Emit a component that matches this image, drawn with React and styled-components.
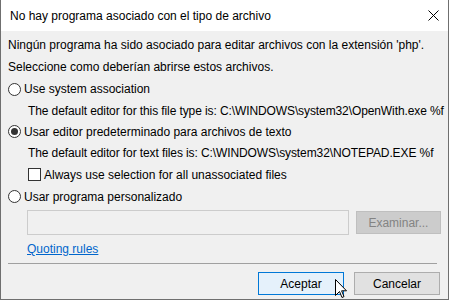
import styled, { createGlobalStyle } from "styled-components";

const GlobalStyle = createGlobalStyle`
    html, body {
        margin: 0;
        padding: 0;
        background: #ffffff;
    }
    body {
        font-family: "Segoe UI", "Liberation Sans", Arial, sans-serif;
        font-size: 12px;
        color: #000;
    }
`

const Window = styled.div`
    position: relative;
    width: 449px;
    height: 300px;
    box-sizing: border-box;
    border: 1px solid #6f6f6f;
    border-top: none;
    background: #f0f0f0;
    display: flex;
    flex-direction: column;
`

const TitleBar = styled.div`
    height: 31px;
    background: #fff;
    display: flex;
    align-items: center;
    justify-content: space-between;
    padding-left: 9px;
    padding-right: 9px;
`

const Content = styled.div`
    display: flex;
    flex-direction: column;
    padding: 3px 7px 0 7px;
`

const Row = styled.div`
    display: flex;
    align-items: center;
    height: ${props => props.h || 22}px;
    padding-left: ${props => props.indent || 0}px;
    letter-spacing: ${props => props.tight ? "-0.1px" : "normal"};
    gap: 3px;
    white-space: nowrap;
`

const Radio = styled.span`
    width: 13px;
    height: 13px;
    box-sizing: border-box;
    border: 1px solid #333;
    border-radius: 50%;
    background: #fff;
    display: flex;
    align-items: center;
    justify-content: center;

    &::after {
        content: "";
        display: ${props => props.checked ? "block" : "none"};
        width: 7px;
        height: 7px;
        border-radius: 50%;
        background: #333;
    }
`

const Check = styled.span`
    width: 13px;
    height: 13px;
    box-sizing: border-box;
    border: 1px solid #333;
    background: #fff;
`

const FieldRow = styled.div`
    display: flex;
    align-items: center;
    gap: 7px;
    padding-left: 19px;
    margin-top: 3px;
    height: 25px;
`

const TextField = styled.div`
    width: 325px;
    height: 25px;
    box-sizing: border-box;
    border: 1px solid #cccccc;
    background: #f0f0f0;
`

const Button = styled.div`
    width: ${props => props.w || 86}px;
    height: 23px;
    box-sizing: border-box;
    display: flex;
    align-items: center;
    justify-content: center;
    border: 1px solid ${props => props.primary ? "#0078d7" : props.disabled ? "#bfbfbf" : "#adadad"};
    background: ${props => props.primary ? "#e5f1fb" : props.disabled ? "#cccccc" : "#e1e1e1"};
    color: ${props => props.disabled ? "#838383" : "#000"};
`

const Link = styled.span`
    color: #0066cc;
    text-decoration: underline;
`

const Separator = styled.div`
    height: 1px;
    background: #a0a0a0;
    margin-right: 4px;
`

const Footer = styled.div`
    display: flex;
    justify-content: flex-end;
    gap: 10px;
    padding: 8px 8px 0 0;
`

const Cursor = styled.svg`
    position: absolute;
    left: 334px;
    top: 279px;
`

const CloseIcon = () => (
    <svg width="11" height="11" viewBox="0 0 11 11">
        <path d="M0.5 0.5 L10.5 10.5 M10.5 0.5 L0.5 10.5" stroke="#000" strokeWidth="1" />
    </svg>
);

export default function App() {
    return (
        <>
            <GlobalStyle />
            <Window>
                <TitleBar>
                    <span>No hay programa asociado con el tipo de archivo</span>
                    <CloseIcon />
                </TitleBar>
                <Content>
                    <Row>Ningún programa ha sido asociado para editar archivos con la extensión 'php'.</Row>
                    <Row>Seleccione como deberían abrirse estos archivos.</Row>
                    <Row><Radio />Use system association</Row>
                    <Row h={21} indent={20} tight>The default editor for this file type is: C:\WINDOWS\system32\OpenWith.exe %f</Row>
                    <Row h={21}><Radio checked />Usar editor predeterminado para archivos de texto</Row>
                    <Row h={21} indent={20} tight>The default editor for text files is: C:\WINDOWS\system32\NOTEPAD.EXE %f</Row>
                    <Row h={23} indent={20}><Check />Always use selection for all unassociated files</Row>
                    <Row h={21}><Radio />Usar programa personalizado</Row>
                    <FieldRow>
                        <TextField />
                        <Button disabled>Examinar...</Button>
                    </FieldRow>
                    <Row h={28} indent={19}><Link>Quoting rules</Link></Row>
                    <Separator />
                </Content>
                <Footer>
                    <Button primary>Aceptar</Button>
                    <Button>Cancelar</Button>
                </Footer>
                <Cursor width="12" height="20" viewBox="0 0 12 20">
                    <path d="M0.5 0.5 L0.5 16.5 L4.5 12.5 L7 18.5 L9 17.6 L6.6 11.8 L11.5 11.8 Z" fill="#fff" stroke="#000" strokeWidth="1" strokeLinejoin="miter" />
                </Cursor>
            </Window>
        </>
    );
}
